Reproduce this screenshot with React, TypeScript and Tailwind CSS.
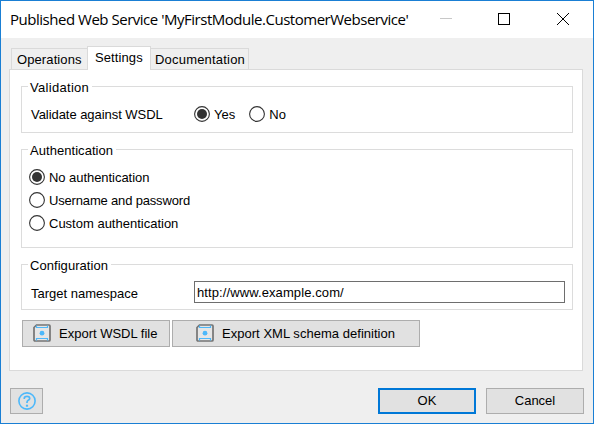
import type { ReactNode } from "react";

function Radio({ label, checked = false, tracking = "" }: { label: string; checked?: boolean; tracking?: string }) {
  return (
    <label className="flex h-[23px] items-center">
      <svg width="16" height="16" viewBox="0 0 16 16" className="shrink-0">
        <circle cx="8" cy="8" r="7.4" fill="#fff" stroke="#333" strokeWidth="1.1" />
        {checked && <circle cx="8" cy="8" r="5" fill="#333" />}
      </svg>
      <span className={`ml-1 pt-[2px] ${tracking}`}>{label}</span>
    </label>
  );
}

function Group({ title, className, tracking = "", children }: { title: string; className: string; tracking?: string; children: ReactNode }) {
  return (
    <fieldset className={`w-[552px] border border-[#dcdcdc] pl-[6px] ${className}`}>
      <legend className={`h-[15px] pr-[3px] pl-[2px] leading-[17px] ${tracking}`}>{title}</legend>
      {children}
    </fieldset>
  );
}

function ExportIcon() {
  return (
    <svg width="18" height="18" viewBox="0 0 18 18" className="-mt-px shrink-0" fill="none">
      <path d="M3.5 1H16Q17 1 17 2V16Q17 17 16 17H2Q1 17 1 16V3.5Z" fill="#e6e6e6" stroke="#747474" strokeWidth="1.7" />
      <path d="M3.5 1.5V3.5H14.5V1.5M3.5 16.5V14.5H14.5V16.5" stroke="#4db8fa" strokeWidth="1.2" />
      <circle cx="9" cy="9.2" r="2.4" fill="#4db8fa" />
    </svg>
  );
}

export default function App() {
  return (
    <div className="flex h-[424px] w-[594px] flex-col overflow-hidden border border-[#1a7fd4] bg-[#efefef] font-['Liberation_Sans',Arial,sans-serif] text-[13px] text-black">
      <header className="flex h-[37px] shrink-0 items-center bg-white">
        <h1 className="ml-[9px] w-[430px] whitespace-nowrap font-['Open_Sans','Noto_Sans',sans-serif] text-[15px] leading-[20px] tracking-[-0.48px] pb-[2px]">
          Published Web Service 'MyFirstModule.CustomerWebservice'
        </h1>
        <svg width="130" height="14" viewBox="0 0 130 14" fill="none" className="-mt-[1px] shrink-0">
          <path d="M0 6.5H12" stroke="#c8c8c8" />
          <rect x="58.5" y="1.5" width="11" height="11" stroke="#000" />
          <path d="M117 1L129 13M129 1L117 13" stroke="#000" />
        </svg>
      </header>

      <nav className="ml-[10px] flex h-[31px] shrink-0 items-end">
        <div className="flex h-[21px] w-[76px] items-center border border-r-0 border-b-0 border-[#dadada] pt-[2px] pl-[5px] tracking-[0.1px]">Operations</div>
        <div className="z-10 -mb-px flex h-[24px] w-[64px] items-center border border-b-0 border-[#dadada] bg-white pb-[2px] pl-[7px] tracking-[0.1px]">Settings</div>
        <div className="flex h-[21px] w-[98px] items-center border border-l-0 border-b-0 border-[#dadada] pt-[2px] pl-[4px] tracking-[0.2px]">Documentation</div>
      </nav>

      <main className="ml-2 h-[302px] w-[574px] shrink-0 border border-[#dadada] bg-white pt-[9px] pl-[11px]">
        <Group title="Validation" className="h-[54px]" tracking="tracking-[0.3px]">
          <div className="mt-[8px] flex items-center">
            <span className="ml-[3px] w-[163px] pt-[3px] tracking-[-0.05px]">Validate against WSDL</span>
            <Radio label="Yes" checked />
            <span className="w-[14px]" />
            <Radio label="No" tracking="tracking-[0.1px]" />
          </div>
        </Group>
        <Group title="Authentication" className="mt-[9px] h-[106px]" tracking="tracking-[0.05px]">
          <div className="mt-[8px] ml-[1px]">
            <Radio label="No authentication" checked tracking="tracking-[-0.05px]" />
            <Radio label="Username and password" tracking="tracking-[-0.17px]" />
            <Radio label="Custom authentication" />
          </div>
        </Group>
        <Group title="Configuration" className="mt-[9px] h-[53px]" tracking="tracking-[0.05px]">
          <div className="mt-[9px] flex items-center">
            <span className="ml-[3px] w-[163px] pt-[3px]">Target namespace</span>
            <input className="h-[22px] w-[371px] border border-[#6e6e6e] pl-[2px] tracking-[0.1px] outline-none" defaultValue="http://www.example.com/" />
          </div>
        </Group>
        <div className="mt-[10px] ml-[1px] flex gap-[2px]">
          <button className="flex h-[27px] w-[148px] items-center gap-[8px] border border-[#adadad] bg-[#e1e1e1] pl-[10px]">
            <ExportIcon />
            <span>Export WSDL file</span>
          </button>
          <button className="flex h-[27px] w-[248px] items-center gap-[8px] border border-[#adadad] bg-[#e1e1e1] pl-[23px]">
            <ExportIcon />
            <span className="tracking-[0.03px]">Export XML schema definition</span>
          </button>
        </div>
      </main>

      <footer className="mt-[17px] ml-[9px] flex">
        <button aria-label="Help" className="flex h-[26px] w-[33px] items-center justify-center border border-[#adadad] bg-[#e1e1e1]">
          <svg width="18" height="18" viewBox="0 0 18 18" fill="none" stroke="#4db8fa" strokeWidth="1.6">
            <circle cx="9" cy="9" r="8.1" />
            <path d="M6.3 7V6.3Q6.3 4.3 9 4.3T11.7 6.4Q11.7 7.6 10.2 8.3Q9 9 9 10.2V11" strokeWidth="1.7" />
            <path d="M9 12.7V14.7" strokeWidth="2.2" />
          </svg>
        </button>
        <button className="ml-[335px] h-[26px] w-[98px] border-2 border-[#0078d7] bg-[#e1e1e1] leading-[20px]">OK</button>
        <button className="ml-[10px] h-[26px] w-[98px] border border-[#adadad] bg-[#e1e1e1] leading-[22px]">Cancel</button>
      </footer>
    </div>
  );
}
